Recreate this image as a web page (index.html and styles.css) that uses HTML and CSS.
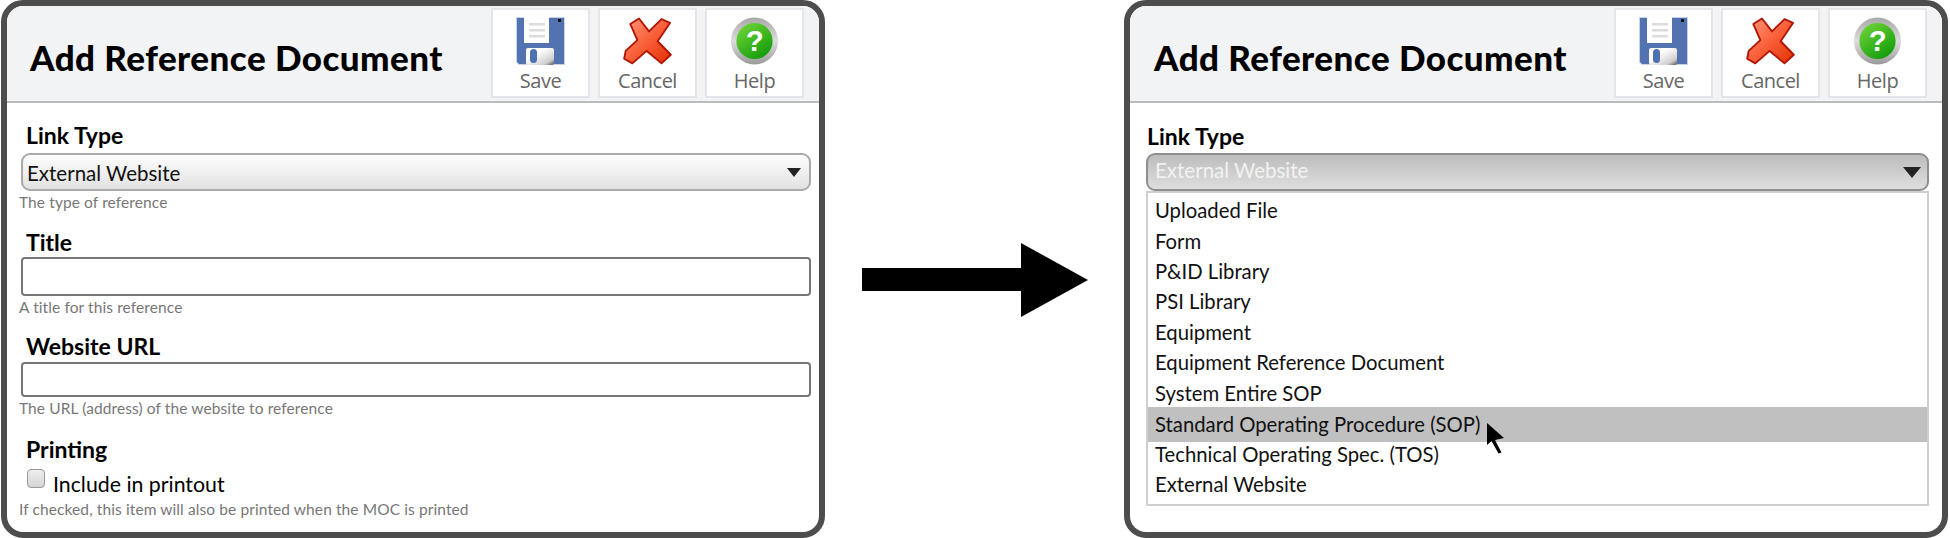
FILE: index.html
```html
<!DOCTYPE html>
<html lang="en">
<head>
  <meta charset="UTF-8">
  <title>Add Reference Document</title>
  <link rel="stylesheet" href="styles.css">
</head>
<body>
  <svg class="sprite" aria-hidden="true">
    <defs>
      <linearGradient id="shutter" x1="0" y1="0" x2="1" y2="1">
        <stop offset="0.35" stop-color="#fff"/>
        <stop offset="0.8" stop-color="#cfcfcf"/>
        <stop offset="1" stop-color="#555"/>
      </linearGradient>
      <linearGradient id="cross" x1="0" y1="0" x2="1" y2="1">
        <stop offset="0" stop-color="#ff9a7c"/>
        <stop offset="0.5" stop-color="#f9603a"/>
        <stop offset="1" stop-color="#e22f00"/>
      </linearGradient>
      <linearGradient id="ring" x1="0" y1="0" x2="0" y2="1">
        <stop offset="0" stop-color="#a8a8a8"/>
        <stop offset="0.5" stop-color="#dcdcdc"/>
        <stop offset="1" stop-color="#9a9a9a"/>
      </linearGradient>
      <linearGradient id="ball" x1="0.1" y1="0" x2="0.8" y2="1">
        <stop offset="0" stop-color="#72d63a"/>
        <stop offset="1" stop-color="#0f9a08"/>
      </linearGradient>
      <symbol id="icon-save" viewBox="0 0 49 48">
        <path d="M0.5 0.5H48.5V47.5H3L0.5 45Z" fill="#5372b0" stroke="#c3d3ea"/>
        <rect x="8" y="0" width="25" height="26" fill="#fff"/>
        <rect x="13" y="6" width="16" height="2.5" fill="#dcdcdc"/>
        <rect x="13" y="12" width="16" height="2.5" fill="#dcdcdc"/>
        <rect x="13" y="18" width="16" height="2.5" fill="#dcdcdc"/>
        <rect x="42" y="2" width="3" height="3" fill="#111"/>
        <rect x="10" y="31" width="28" height="17" rx="2" fill="url(#shutter)"/>
        <rect x="14" y="32" width="7" height="14" rx="3.5" fill="#4e71b1"/>
      </symbol>
      <symbol id="icon-cancel" viewBox="0 0 42 41">
        <path d="M6.3 6 13.7 1.2 22.3 12.3 33 1.7 40.3 5 29.7 20.7 41 32.3 33 39.7 20.3 29 8 39.7 1 35.7 2.3 29 12.3 19.7Z" fill="url(#cross)" stroke="#b01505" stroke-width="1.6" stroke-linejoin="round"/>
      </symbol>
      <symbol id="icon-help" viewBox="0 0 49 49">
        <circle cx="24.5" cy="24.5" r="24" fill="url(#ring)"/>
        <circle cx="24.5" cy="24.5" r="18.5" fill="url(#ball)"/>
        <text x="24.5" y="35" text-anchor="middle" class="help-mark">?</text>
      </symbol>
    </defs>
  </svg>

  <div class="page">
    <section class="panel panel-left">
      <header class="panel-head">
        <h1>Add Reference Document</h1>
        <div class="tools">
          <button class="tool"><svg class="tool-icon"><use href="#icon-save"/></svg>Save</button>
          <button class="tool"><svg class="tool-icon"><use href="#icon-cancel"/></svg>Cancel</button>
          <button class="tool"><svg class="tool-icon"><use href="#icon-help"/></svg>Help</button>
        </div>
      </header>
      <form class="form">
        <div class="field">
          <label>Link Type</label>
          <div class="select">External Website<span class="caret"></span></div>
          <div class="hint">The type of reference</div>
        </div>
        <div class="field">
          <label>Title</label>
          <input class="text-input" type="text">
          <div class="hint">A title for this reference</div>
        </div>
        <div class="field">
          <label>Website URL</label>
          <input class="text-input short" type="text">
          <div class="hint">The URL (address) of the website to reference</div>
        </div>
        <div class="field">
          <label>Printing</label>
          <div class="check-row"><input class="check" type="checkbox"><span>Include in printout</span></div>
          <div class="hint">If checked, this item will also be printed when the MOC is printed</div>
        </div>
      </form>
    </section>

    <div class="arrow">
      <svg width="226" height="74" viewBox="0 0 226 74"><path d="M0 25H159V0L226 37 159 74V48H0Z" fill="#000"/></svg>
    </div>

    <section class="panel panel-right">
      <header class="panel-head">
        <h1>Add Reference Document</h1>
        <div class="tools">
          <button class="tool"><svg class="tool-icon"><use href="#icon-save"/></svg>Save</button>
          <button class="tool"><svg class="tool-icon"><use href="#icon-cancel"/></svg>Cancel</button>
          <button class="tool"><svg class="tool-icon"><use href="#icon-help"/></svg>Help</button>
        </div>
      </header>
      <form class="form">
        <div class="field">
          <label>Link Type</label>
          <div class="select open">External Website<span class="caret"></span></div>
          <ul class="options">
            <li>Uploaded File</li>
            <li>Form</li>
            <li>P&amp;ID Library</li>
            <li>PSI Library</li>
            <li>Equipment</li>
            <li>Equipment Reference Document</li>
            <li>System Entire SOP</li>
            <li class="hover">Standard Operating Procedure (SOP)
              <svg class="pointer" width="18" height="31" viewBox="0 0 18 31"><path d="M0 0 17 15 8 17 14.500 29.500 11.500 30.500 4.500 18 0 22Z" fill="#000"/></svg>
            </li>
            <li>Technical Operating Spec. (TOS)</li>
            <li>External Website</li>
          </ul>
        </div>
      </form>
    </section>
  </div>
</body>
</html>
```

FILE: styles.css
```css
*, *::before, *::after { box-sizing: border-box; }
html, body { margin: 0; padding: 0; background: #fff; }
body {
  width: 1950px;
  height: 538px;
  overflow: hidden;
  font-family: 'Lato', 'Open Sans', sans-serif;
  color: #000;
}
.sprite { display: block; width: 0; height: 0; }
.help-mark { font: bold 30px 'Liberation Sans', sans-serif; fill: #fff; }

.page { display: flex; height: 538px; padding: 0 2px 0 1px; }
.panel {
  width: 824px;
  height: 538px;
  background: #fff;
  border: 6px solid #4d4d4d;
  border-radius: 22px;
  overflow: hidden;
  flex: none;
}
.arrow { flex: 1; display: flex; align-items: flex-start; justify-content: center; padding-top: 243px; }
.arrow svg { display: block; }

.panel-head {
  height: 97px;
  display: flex;
  align-items: flex-start;
  justify-content: space-between;
  padding: 2px 15px 0 23px;
  background: #f2f3f5;
  border-bottom: 2px solid #bcbcbc;
}
.panel-right .panel-head { padding-left: 24px; }
h1 { margin: 27px 0 0; font-size: 35px; line-height: 44px; font-weight: 900; letter-spacing: 0.45px; }
.tools { display: flex; gap: 8px; }
.tool {
  width: 99px;
  height: 90px;
  padding: 7px 0 0;
  background: #fff;
  border: 2px solid #e3e5e8;
  font-family: 'Open Sans', sans-serif;
  font-size: 20px;
  line-height: 24px;
  letter-spacing: -0.5px;
  color: #666;
  display: flex;
  flex-direction: column;
  align-items: center;
}
.tool-icon { width: 49px; height: 48px; margin-bottom: 4px; flex: none; }

.form { padding: 22px 8px 0 14px; }
.field { margin-bottom: 17px; }
.field label { display: block; height: 28px; padding-left: 5px; font-size: 23px; line-height: 24px; font-weight: 700; }
.field:nth-child(1) label { line-height: 20px; }
.field:nth-child(2) label { line-height: 26px; }
.field:nth-child(4) label { line-height: 28px; }
.select {
  position: relative;
  height: 38px;
  padding-left: 4px;
  font-size: 20.500px;
  line-height: 36px;
  background: linear-gradient(#fdfdfd, #e2e2e2);
  border: 2px solid #aaa;
  border-radius: 9px;
  color: #111;
}
.caret {
  position: absolute;
  right: 8px;
  top: 13px;
  border-style: solid;
  border-width: 9px 7px 0;
  border-color: #222 transparent transparent;
}
.text-input {
  display: block;
  width: 100%;
  height: 39px;
  background: #fff;
  border: 2px solid #777;
  border-radius: 4px;
}
.text-input.short { height: 35px; }
.hint { height: 21px; margin-left: -2px; font-size: 15.500px; line-height: 22px; letter-spacing: 0.1px; color: #777; }
.check-row { display: flex; align-items: flex-start; height: 35px; padding: 6px 0 0 6px; font-size: 21.300px; line-height: 30px; }
.check {
  appearance: none;
  width: 18px;
  height: 19px;
  margin: 0 8px 0 0;
  background: linear-gradient(#eee, #d4d4d4);
  border: 1px solid #999;
  border-radius: 4px;
}

.panel-right .form { padding: 22px 13px 0 16px; }
.panel-right .field label { padding-left: 1px; line-height: 22px; }
.panel-right .select { padding-left: 7px; line-height: 30px; }
.panel-right .caret { top: 12px; right: 6px; border-width: 11px 9px 0; }
.select.open { background: linear-gradient(#bdbdbd, #dedede); border-color: #8f8f8f; color: #f2f2f2; }
.options {
  list-style: none;
  margin: 0;
  padding: 2px 0 0;
  height: 315px;
  border: 2px solid #cfcfcf;
  font-size: 20.300px;
}
.options li { display: flex; align-items: center; height: 30.4px; padding-left: 7px; color: #111; }
.options li.hover { background: #c0c0c0; height: 35px; margin: -1px 0 -3.200px; }
.pointer { flex: none; margin: 28px 0 0 7px; }
```
